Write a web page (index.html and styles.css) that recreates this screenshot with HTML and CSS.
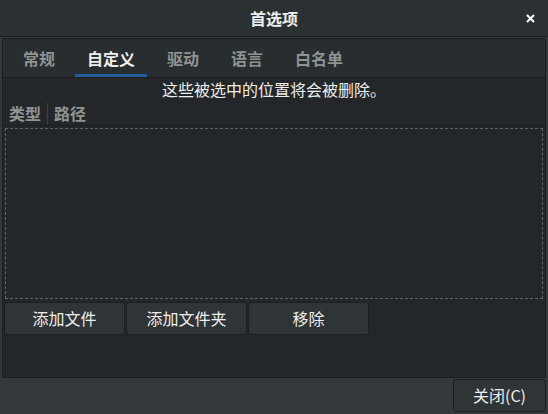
FILE: index.html
```html
<!DOCTYPE html>
<html lang="zh-CN">
<head>
  <meta charset="UTF-8" />
  <title>首选项</title>
  <link rel="stylesheet" href="styles.css">
</head>
<body>
  <div class="dialog">
    <div class="titlebar">
      <div class="title">首选项</div>
      <div class="close-x">
        <svg width="9" height="9" viewBox="0 0 9 9"><path d="M1 1 L8 8 M8 1 L1 8" stroke="#ffffff" stroke-width="2"/></svg>
      </div>
    </div>
    <div class="content">
      <div class="notebook">
        <div class="tabs">
          <div class="tab">常规</div>
          <div class="tab active">自定义</div>
          <div class="tab">驱动</div>
          <div class="tab">语言</div>
          <div class="tab">白名单</div>
        </div>
        <div class="page">
          <div class="info">这些被选中的位置将会被删除。</div>
          <div class="columns">
            <div class="col col-type">类型</div>
            <div class="col">路径</div>
          </div>
          <div class="list"></div>
          <div class="buttons">
            <button class="btn">添加文件</button>
            <button class="btn">添加文件夹</button>
            <button class="btn">移除</button>
          </div>
        </div>
      </div>
      <div class="actions">
        <button class="btn close-btn">关闭(C)</button>
      </div>
    </div>
  </div>
</body>
</html>
```

FILE: styles.css
```css
body {
  margin: 0;
  font-family: "Noto Sans CJK SC", "Noto Sans", sans-serif;
  background-color: #33393b;
  color: #eeeeec;
}
.dialog {
  width: 548px;
  height: 414px;
  display: flex;
  flex-direction: column;
}
.titlebar {
  height: 36px;
  background-color: #2b3033;
  border-bottom: 1px solid #1b1f20;
  display: flex;
  align-items: center;
  justify-content: center;
  position: relative;
  flex-shrink: 0;
}
.title {
  font-size: 16px;
  font-weight: bold;
  color: #eeeeec;
}
.close-x {
  position: absolute;
  right: 13px;
  top: 14px;
  width: 9px;
  height: 9px;
  display: flex;
}
.content {
  flex: 1;
  display: flex;
  flex-direction: column;
  padding: 1px 2px 2px 2px;
}
.notebook {
  height: 340px;
  box-sizing: border-box;
  background-color: #232729;
  border: 1px solid #1b1f20;
  display: flex;
  flex-direction: column;
  flex-shrink: 0;
}
.tabs {
  height: 38px;
  display: flex;
  gap: 8px;
  padding-left: 8px;
  border-bottom: 1px solid #1b1f20;
  background-color: #282d2f;
}
.tab {
  padding: 3px 12px 0 12px;
  display: flex;
  align-items: center;
  font-size: 16px;
  font-weight: bold;
  color: #8f9394;
  border-bottom: 3px solid transparent;
}
.tab.active {
  color: #eeeeec;
  border-bottom-color: #215d9c;
}
.page {
  display: flex;
  flex-direction: column;
  padding: 0 1px;
}
.info {
  text-align: center;
  font-size: 16px;
  height: 25px;
  line-height: 23px;
  color: #eeeeec;
}
.columns {
  display: flex;
  height: 22px;
  border-bottom: 1px solid #1b1f20;
  margin: 0 -1px;
}
.col {
  font-size: 16px;
  font-weight: bold;
  color: #8f9394;
  padding: 0 6px;
  line-height: 20px;
}
.col-type {
  border-right: 1px solid #3b4043;
}
.list {
  height: 169px;
  margin: 2px 1px 0 1px;
  border: 1px dashed #5f6466;
}
.buttons {
  display: flex;
  gap: 1px;
  margin-top: 3px;
}
.btn {
  width: 121px;
  height: 33px;
  padding: 0 0 2px 0;
  background-color: #2f3436;
  border: 1px solid #1b1f20;
  border-radius: 3px;
  color: #eeeeec;
  font-family: inherit;
  font-size: 16px;
}
.actions {
  flex: 1;
  display: flex;
  justify-content: flex-end;
  align-items: flex-end;
}
.close-btn {
  width: 93px;
  height: 33px;
}
```
